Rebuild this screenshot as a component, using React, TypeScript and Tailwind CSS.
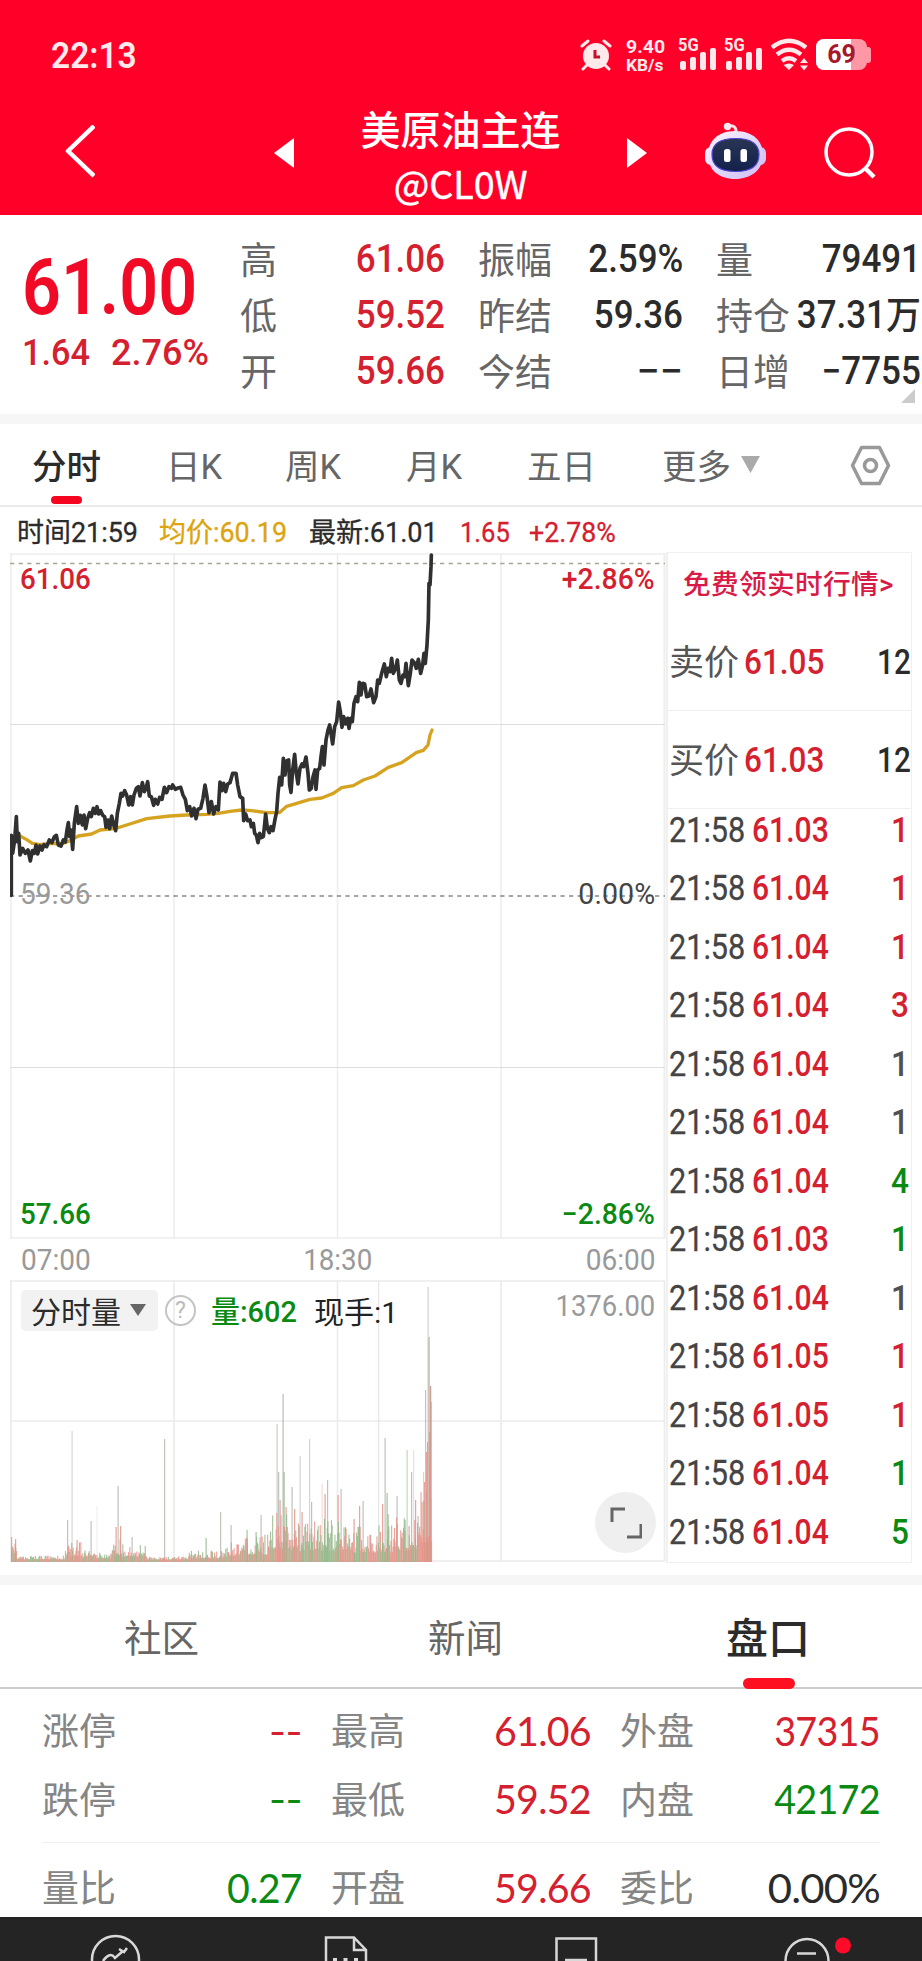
import React from "react";

const RED = "text-[#d4202f]";
const GREEN = "text-[#0a8a12]";
const GRAY = "text-[#505050]";

function StatusBar() {
  const bars = (
    <svg width="36" height="22" viewBox="0 0 36 22" fill="#ffe9ea">
      <rect x="0" y="13" width="6" height="9" rx="2" />
      <rect x="10" y="9" width="6" height="13" rx="2" />
      <rect x="20" y="4" width="6" height="18" rx="2" />
      <rect x="30" y="0" width="6" height="22" rx="2" />
    </svg>
  );
  return (
    <div className="flex h-[90px] items-start pl-[51px] pt-[38px] text-[#ffe9ea]">
      <span className="w-[529px] text-[36px] leading-none font-semibold">
        <span className="inline-block origin-left scale-x-[.93]">22:13</span>
      </span>
      <svg width="32" height="33" viewBox="0 0 32 33" fill="none" stroke="#ffe9ea" strokeLinecap="round">
        <circle cx="16" cy="18" r="13" fill="#ffe9ea" stroke="none" />
        <path d="M2 8 L8 3 M24 3 L30 8" strokeWidth="3" />
        <path d="M7 27 L3 31 M25 27 L29 31" strokeWidth="3" />
        <path d="M15 12 V19 H20" stroke="#c4102c" strokeWidth="3" strokeLinecap="butt" />
      </svg>
      <div className="ml-[14px] flex w-[52px] flex-col text-[18px] leading-[18px] font-bold whitespace-nowrap">
        <span className="origin-left scale-x-[1.08]">9.40</span>
        <span className="origin-left scale-x-[1.02] text-[17px]">KB/s</span>
      </div>
      {[0, 1].map((i) => (
        <div key={i} className="relative h-[33px] w-[46px] pt-[10px] pl-[2px]">
          <span className="absolute -top-px left-0 origin-left scale-x-[.94] text-[17.500px] leading-none font-bold">5G</span>
          {bars}
        </div>
      ))}
      <svg width="40" height="33" viewBox="0 0 40 33" fill="none" stroke="#ffe9ea" strokeWidth="4.300">
        <path d="M2 9.500 Q19 -4 36 9.500" />
        <path d="M7 16.500 Q19 7 31 16.500" />
        <path d="M12 23 Q19 17.500 26 23" />
        <path d="M13.500 27 Q19 24 24 27 L19 32 Z" fill="#ffe9ea" stroke="none" />
        <path d="M30 25 l4 -5 l4 5 z M30 27.500 l4 5 l4 -5 z" fill="#ffe9ea" stroke="none" />
      </svg>
      <div className="mt-px ml-[6px] flex h-[31px] w-[55px] items-center">
        <div className="relative flex h-[31px] w-[51px] items-center justify-center overflow-hidden rounded-[8px] bg-[#ff98a4]">
          <div className="absolute inset-y-0 left-0 w-[35px] bg-white" />
          <span className="relative text-[25px] leading-none font-bold text-[#a8182c]">69</span>
        </div>
        <div className="h-[16px] w-[4px] rounded-r-[3px] bg-[#ff98a4]" />
      </div>
    </div>
  );
}

function Robot() {
  return (
    <svg width="61" height="58" viewBox="0 0 61 58">
      <defs>
        <linearGradient id="shell" x1="0" y1="0" x2="1" y2="1">
          <stop offset="0" stopColor="#fff4fa" />
          <stop offset=".55" stopColor="#e0d6fb" />
          <stop offset="1" stopColor="#d0bef5" />
        </linearGradient>
        <linearGradient id="face" x1="0" y1="0" x2="0" y2="1">
          <stop offset="0" stopColor="#2a3553" />
          <stop offset="1" stopColor="#13214c" />
        </linearGradient>
      </defs>
      <path d="M23 4 Q32 2 31 12" fill="none" stroke="#ffdfe9" strokeWidth="3" />
      <circle cx="22.500" cy="4.500" r="3.700" fill="#ffe9ef" />
      <rect x="0" y="25" width="12" height="18" rx="6" fill="#f5eaff" />
      <rect x="49" y="25" width="12" height="18" rx="6" fill="#d6c6f6" />
      <path d="M30 9 C49 9 58 20 58 33 C58 48 46 57 30 57 C14 57 3 48 3 33 C3 20 12 9 30 9Z" fill="url(#shell)" />
      <path d="M30.500 16.500 C46 16.500 54 22 54 32.500 C54 44 46 49.500 30.500 49.500 C15 49.500 7 44 7 32.500 C7 22 15 16.500 30.500 16.500Z" fill="url(#face)" stroke="#4c45cf" strokeWidth="1.200" />
      <rect x="19" y="27" width="6.500" height="13" rx="2.500" fill="#fff" />
      <rect x="35.500" y="27" width="6.500" height="13" rx="2.500" fill="#fff" />
    </svg>
  );
}

function Header() {
  return (
    <header className="h-[215px] bg-[#ff0029] text-white">
      <StatusBar />
      <div className="flex h-[125px] items-center pl-[64px]">
        <svg width="31" height="56" viewBox="0 0 31 56" fill="none" stroke="#fff" strokeWidth="4.500" strokeLinejoin="round">
          <path d="M30 1 L4 26 L30 51" />
        </svg>
        <svg className="ml-[179px]" width="20" height="30" viewBox="0 0 20 30" fill="#fff">
          <path d="M20 0 V30 L0 15Z" />
        </svg>
        <div className="flex w-[333px] flex-col items-center pt-[4px]">
          <span className="text-[40px] leading-[56px] font-medium">美原油主连</span>
          <span className="flex h-[45px] items-center font-['Noto_Sans_CJK_SC',sans-serif] text-[38px] leading-none">
            <span className="scale-x-[.99] [-webkit-text-stroke:.5px_white]">@CL0W</span>
          </span>
        </div>
        <svg width="20" height="30" viewBox="0 0 20 30" fill="#fff">
          <path d="M0 0 V30 L20 15Z" />
        </svg>
        <div className="-mt-[3px] ml-[58px]">
          <Robot />
        </div>
        <svg className="ml-[58px]" width="52" height="52" viewBox="0 0 52 52" fill="none" stroke="#fff" strokeWidth="3.500">
          <circle cx="25" cy="25" r="23" />
          <path d="M41 41 L50 50" strokeWidth="4.500" />
        </svg>
      </div>
    </header>
  );
}

const quote: [string, string, string][][] = [
  [["高", "61.06", RED], ["振幅", "2.59%", "text-[#2b2b2b]"], ["量", "79491", "text-[#2b2b2b]"]],
  [["低", "59.52", RED], ["昨结", "59.36", "text-[#2b2b2b]"], ["持仓", "37.31万", "text-[#2b2b2b]"]],
  [["开", "59.66", RED], ["今结", "−−", "text-[#2b2b2b]"], ["日增", "−7755", "text-[#2b2b2b]"]],
];

function Quote() {
  return (
    <section className="relative flex h-[199px] bg-white">
      <div className="flex w-[240px] flex-col pt-[33px] pl-[22px]">
        <span className="origin-left scale-x-[.885] text-[77px] leading-[80px] font-semibold text-[#f00a26]">61.00</span>
        <span className="flex gap-[19px] pt-[5px] text-[36px] leading-[40px] font-medium text-[#d4202f]">
          <span className="w-[70px] origin-left scale-x-[.95]">1.64</span>
          <span className="origin-left">2.76%</span>
        </span>
      </div>
      <div className="flex flex-col pt-[16px]">
        {quote.map((row, r) => (
          <div key={r} className="flex h-[56px] items-center gap-[33px]">
            {row.map(([label, value, color]) => (
              <div key={label} className="flex w-[205px] items-center justify-between whitespace-nowrap">
                <span className="pt-[4px] text-[37px] leading-none text-[#666]">{label}</span>
                <span className={"w-0 text-[38px] leading-none font-medium " + color}>
                  <span className="flex justify-end">
                    <span className={"origin-right " + (value === "−−" ? "scale-x-[1.08]" : "scale-x-[.92]")}>{value}</span>
                  </span>
                </span>
              </div>
            ))}
          </div>
        ))}
      </div>
      <svg className="absolute right-[7px] bottom-[11px]" width="14" height="14" viewBox="0 0 14 14">
        <path d="M14 0 V14 H0Z" fill="#ccc" />
      </svg>
    </section>
  );
}

function Periods() {
  return (
    <nav className="flex h-[83px] items-center border-b-2 border-[#eaeaea] bg-white pt-[6px] pl-[32px] text-[34.500px] leading-none text-[#666]">
      <div className="relative w-[134px] font-medium text-[#2b2b2b]">
        分时
        <div className="absolute top-[46px] left-[19px] h-[8px] w-[31px] rounded-full bg-[#f5051f]" />
      </div>
      <span className="w-[119px]">日K</span>
      <span className="w-[121px]">周K</span>
      <span className="w-[121px]">月K</span>
      <span className="w-[135px]">五日</span>
      <span>更多</span>
      <svg className="mb-[6px] ml-[10px]" width="19" height="17" viewBox="0 0 19 17">
        <path d="M0 0 H19 L9.500 17Z" fill="#aaa" />
      </svg>
      <svg className="mb-[5px] ml-[90px]" width="41" height="41" viewBox="0 0 41 41" fill="none" stroke="#999" strokeWidth="3.500" strokeLinejoin="round">
        <path d="M11.500 2.500 H29.500 L38.500 20.500 L29.500 38.500 H11.500 L2.500 20.500Z" />
        <circle cx="20.500" cy="20.500" r="6" />
      </svg>
    </nav>
  );
}

function InfoLine() {
  return (
    <div className="flex h-[46px] items-center pt-[5px] pl-[17px] text-[27.500px] leading-none whitespace-nowrap text-[#2b2b2b] [-webkit-text-stroke:.3px_currentColor]">
      <span className="w-[142px]"><span className="inline-block origin-left scale-x-[.98]">时间21:59</span></span>
      <span className="w-[150px] text-[#dca40f]"><span className="inline-block origin-left scale-x-[.98]">均价:60.19</span></span>
      <span className="w-[151px]"><span className="inline-block origin-left scale-x-[.985]">最新:61.01</span></span>
      <span className="w-[69px] text-[#d4202f]"><span className="inline-block origin-left scale-x-[.93]">1.65</span></span>
      <span className="text-[#d4202f]"><span className="inline-block origin-left scale-x-[.97]">+2.78%</span></span>
    </div>
  );
}

const pricePath =
  "M34 1066 L34 886 L38 940 L44 900 L49 830 L52 905 L56 880 L60 945 L68 925 L76 940 L84 930 L91 963 L97 932 L103 940 L108 915 L113 942 L120 918 L126 930 L132 914 L140 920 L148 900 L156 908 L163 890 L169 886 L175 915 L183 918 L190 900 L196 906 L201 870 L205 848 L209 890 L213 870 L218 928 L223 850 L230 800 L235 850 L241 826 L247 855 L252 825 L257 866 L263 835 L269 818 L274 830 L280 805 L286 820 L291 800 L296 822 L302 812 L308 826 L314 830 L318 862 L324 840 L329 866 L335 828 L341 855 L347 872 L352 820 L358 790 L363 760 L368 768 L374 752 L380 765 L386 795 L392 770 L397 795 L402 765 L409 745 L415 740 L420 768 L427 728 L433 755 L438 745 L443 725 L448 768 L454 770 L461 796 L466 778 L473 792 L479 772 L486 778 L493 742 L500 758 L507 740 L514 745 L518 735 L526 748 L534 744 L542 742 L549 765 L556 778 L562 812 L569 800 L575 828 L582 805 L588 836 L594 808 L602 805 L609 775 L615 735 L621 770 L627 818 L634 785 L641 822 L648 800 L655 810 L660 726 L666 752 L671 730 L677 755 L683 732 L690 728 L698 700 L708 700 L713 735 L720 770 L728 775 L731 842 L737 822 L743 842 L750 840 L754 860 L760 850 L764 880 L769 885 L774 908 L779 880 L784 893 L790 890 L793 862 L797 822 L802 865 L808 878 L813 860 L819 872 L825 838 L830 815 L834 760 L839 712 L845 735 L850 655 L855 705 L860 663 L866 660 L869 735 L873 757 L878 690 L884 643 L889 700 L894 732 L900 685 L906 672 L911 680 L918 651 L924 700 L928 750 L934 745 L939 710 L945 690 L948 748 L953 690 L959 685 L963 650 L967 620 L972 675 L978 600 L984 570 L989 555 L993 580 L998 612 L1004 560 L1010 545 L1016 486 L1021 515 L1026 562 L1031 530 L1037 552 L1043 535 L1047 565 L1052 535 L1057 545 L1062 490 L1068 470 L1073 485 L1078 427 L1083 465 L1088 430 L1094 432 L1100 470 L1107 468 L1113 447 L1121 488 L1128 470 L1133 420 L1138 430 L1145 400 L1153 372 L1159 410 L1164 385 L1170 395 L1175 355 L1180 400 L1187 385 L1192 360 L1198 420 L1203 430 L1209 405 L1214 410 L1218 370 L1225 437 L1231 400 L1236 360 L1243 368 L1249 385 L1255 358 L1262 400 L1268 375 L1272 340 L1276 370 L1281 315 L1285 240 L1287 130 L1290 135 L1293 80 L1294 45";

const averagePath =
  "M34 890 L60 888 L80 899 L97 910 L120 914 L150 910 L185 912 L210 902 L235 888 L275 882 L300 870 L345 866 L380 855 L440 836 L510 828 L560 825 L620 823 L655 820 L690 814 L725 810 L755 812 L800 818 L838 818 L860 799 L890 790 L930 778 L965 774 L1000 760 L1025 743 L1060 737 L1090 720 L1125 708 L1165 682 L1205 668 L1250 637 L1270 631 L1284 615 L1290 585 L1296 570";

function PriceChart() {
  return (
    <div className="relative h-[686px] w-[656px] text-[29.500px] leading-none">
      <svg className="absolute top-0 left-0" width="656" height="686" viewBox="0 0 656 686">
        <g stroke="#eeeeee" strokeWidth="1.600">
          <path d="M0 1 H655 M0 685 H655 M1 0 V686 M164 0 V686 M327.500 0 V686 M491 0 V686" />
          <path d="M654.500 0 V686" strokeWidth="2" />
          <path d="M0 171.500 H655 M0 514.500 H655" stroke="#dddddd" strokeWidth="1.200" />
        </g>
        <path d="M0 10.500 H655" stroke="#a8a595" strokeWidth="1.500" strokeDasharray="4.300 4.300" />
        <path d="M0 343 H655" stroke="#888" strokeWidth="1.500" strokeDasharray="4.300 4.300" />
        <g transform="translate(-10 -13) scale(.33333)" fill="none" strokeLinejoin="round" strokeLinecap="round">
          <path d={averagePath} stroke="#d6a320" strokeWidth="10" />
          <path d={pricePath} stroke="#303030" strokeWidth="11" />
        </g>
      </svg>
      <span className="absolute top-[12px] left-[10px] origin-left scale-x-[.94] font-medium text-[#d4202f]">61.06</span>
      <span className="absolute top-[12px] right-[11px] origin-right scale-x-[.96] font-medium text-[#d4202f]">+2.86%</span>
      <span className="absolute top-[327px] left-[10px] origin-left scale-x-[.95] text-[#999]">59.36</span>
      <span className="absolute top-[327px] right-[11px] origin-right scale-x-[.97] text-[#444]">0.00%</span>
      <span className="absolute bottom-[10px] left-[10px] origin-left scale-x-[.94] font-medium text-[#0a8a12]">57.66</span>
      <span className="absolute right-[11px] bottom-[10px] origin-right scale-x-[.96] font-medium text-[#0a8a12]">−2.86%</span>
    </div>
  );
}

type Bar = { x: number; h: number; c: string; w: number };
const R = "#e5938a";
const G = "#92b98a";
const N = "#b3b8b0";

function noise(): Bar[] {
  let seed = 77;
  const rand = () => {
    seed = (seed * 1103515245 + 12345) % 2147483648;
    return seed / 2147483648;
  };
  const envelope = (x: number) => {
    if (x < 17) return 18;
    if (x < 65) return 5;
    if (x < 82) return 20;
    if (x < 112) return 10;
    if (x < 122) return 24;
    if (x < 146) return 18;
    if (x < 188) return 4;
    if (x < 225) return 10;
    if (x < 245) return 18;
    if (x < 268) return 26;
    if (x < 290) return 52;
    if (x < 345) return 42;
    if (x < 395) return 36;
    if (x < 420) return 46;
    return 80;
  };
  const out: Bar[] = [];
  for (let x = 11.5; x < 431.5; x += 0.7) {
    const e = envelope(x);
    const k = rand();
    const h = 1.500 + e * (0.22 + 0.8 * k * k);
    out.push({ x, h, c: rand() < 0.55 ? R : G, w: 1.100 });
  }
  return out;
}

const spikes: Bar[] = [
  [11.5, 25, R], [15.500, 23, R], [67.500, 42, N], [72, 131, "#ccd2ca"], [77, 22, R], [91, 41, N], [97, 56, "#ededed"], [116, 35, R], [118, 76, N],
  [120.500, 36, R], [132, 25, N], [164.500, 123, N], [206, 24, G], [220.500, 50, N], [231, 37, N], [247, 32, G], [256, 30, G], [261, 47, N],
  [277, 138, "#c4c4b8"], [278.500, 90, N], [283, 168, "#a9b2ae"], [284, 90, G], [280, 62, R], [286, 55, R], [292, 75, N], [294.500, 53, R], [300, 106, "#cccccc"],
  [302, 50, R], [309.500, 123, "#cccccc"], [311.500, 60, N], [322, 78, "#f3d5d0"], [325, 68, R], [327.500, 82, N], [338, 67, R], [341, 73, N],
  [354, 43, R], [359.500, 56, R], [363, 61, N], [378.500, 281, "#e6dfe2"], [382.500, 58, R], [385, 124, N], [387, 69, G], [388, 48, G], [397, 66, N],
  [405, 42, G], [407, 112, "#b6d0b0"], [409, 36, R], [411.500, 90, N], [413.500, 112, "#ead9d5"], [415.500, 62, R], [418, 46, N], [422, 60, R],
  [423.500, 90, "#e9c5be"], [425.500, 172, "#cfb3aa"], [426.500, 110, R], [428, 275, "#c9c5c0"], [429, 225, "#a7aca0"], [430.500, 176, "#c3897c"], [431, 160, R],
  [427.500, 120, R], [429.500, 130, R], [430, 100, R], [424.500, 80, R],
].map(([x, h, c]) => ({ x: x as number, h: h as number, c: c as string, w: 1.200 }));

const volumeBars = [...spikes, ...noise()];

function VolumeChart() {
  return (
    <div className="relative h-[282px] w-[656px] text-[29.500px] leading-none">
      <svg className="absolute top-0 left-0" width="656" height="282" viewBox="0 0 656 282">
        <path d="M0 1 H655 M0 141 H655 M0 281 H655 M1 0 V282 M164 0 V282 M327.500 0 V282 M491 0 V282 M654.500 0 V282" stroke="#ececec" strokeWidth="1.700" />
        {volumeBars.map((b, i) => (
          <rect key={i} x={b.x - 10.500} y={282 - b.h} width={b.w} height={b.h} fill={b.c} opacity=".85" />
        ))}
      </svg>
      <div className="relative flex items-start pt-[10px] pl-[11px]">
        <div className="flex h-[41px] w-[137px] items-center rounded-[5px] bg-[#f2f2f2] pt-[4px] pl-[10px] text-[30px] text-[#2b2b2b]">
          分时量
          <svg className="mb-[5px] ml-[9px]" width="16" height="12" viewBox="0 0 16 12">
            <path d="M0 0 H16 L8 12Z" fill="#666" />
          </svg>
        </div>
        <div className="mt-[5px] ml-[7px] flex size-[31px] items-center justify-center rounded-full border-2 border-[#c4c4c4] text-[23px] text-[#bbb]">?</div>
        <span className="mt-[8px] ml-[15px] w-[103px] font-medium whitespace-nowrap text-[#0a8a12]"><span className="inline-block origin-left scale-x-[.98]">量:602</span></span>
        <span className="mt-[8px] text-[30px] text-[#222]"><span className="inline-block origin-left">现手:1</span></span>
      </div>
      <span className="absolute top-[12px] right-[11px] origin-right scale-x-[.93] text-[#999]">1376.00</span>
      <div className="absolute right-[10px] bottom-[9px] flex size-[61px] items-center justify-center rounded-full bg-[#efefef]">
        <svg width="32" height="32" viewBox="0 0 32 32" fill="none" stroke="#666" strokeWidth="3">
          <path d="M2 15 V2 H15 M31 17 V30 H17" />
        </svg>
      </div>
    </div>
  );
}

const ticks: [string, string, string][] = [
  ["61.03", "1", RED],
  ["61.04", "1", RED],
  ["61.04", "1", RED],
  ["61.04", "3", RED],
  ["61.04", "1", GRAY],
  ["61.04", "1", GRAY],
  ["61.04", "4", GREEN],
  ["61.03", "1", GREEN],
  ["61.04", "1", GRAY],
  ["61.05", "1", RED],
  ["61.05", "1", RED],
  ["61.04", "1", GREEN],
  ["61.04", "5", GREEN],
];

function OrderPanel() {
  return (
    <aside className="h-[1011px] w-[246px] border border-l-2 border-[#f0f0f0] text-[35px] leading-none">
      <div className="flex h-[60px] items-center pt-[3px] pl-[15px] text-[27.700px] font-medium tracking-[.3px] whitespace-nowrap text-[#d81a47]">免费领实时行情&gt;</div>
      {[["卖价", "61.05"], ["买价", "61.03"]].map(([label, price]) => (
        <div key={label} className="flex h-[98px] items-center border-b border-[#efefef] pt-px pl-px">
          <span className="w-[75px] pt-[3px] text-[#555]">{label}</span>
          <span className="w-[100px] font-medium text-[#d4202f]"><span className="inline-block origin-left scale-x-[.9]">{price}</span></span>
          <span className="flex grow justify-end font-medium text-[#2b2b2b]"><span className="origin-right scale-x-[.85]">12</span></span>
        </div>
      ))}
      <div className="-mt-[8px]">
        {ticks.map(([price, count, color], i) => (
          <div key={i} className="flex h-[58.500px] items-center pl-px">
            <span className="w-[83px] text-[#444] [-webkit-text-stroke:.3px_currentColor]"><span className="inline-block origin-left scale-x-[.875]">21:58</span></span>
            <span className="font-medium text-[#d4202f]"><span className="inline-block origin-left scale-x-[.86]">{price}</span></span>
            <span className={"flex grow justify-end pr-[2px] font-medium " + color}><span className="origin-right scale-x-[.9]">{count}</span></span>
          </div>
        ))}
      </div>
    </aside>
  );
}

function Board() {
  return (
    <section className="flex h-[1023px] pl-[10px]">
      <div className="mt-px">
        <PriceChart />
        <div className="flex h-[41px] w-[656px] items-center justify-between pt-[3px] pr-[11px] pl-[11px] text-[29.500px] leading-none text-[#999]">
          <span className="origin-left scale-x-[.95]">07:00</span>
          <span className="scale-x-[.94]">18:30</span>
          <span className="origin-right scale-x-[.95]">06:00</span>
        </div>
        <VolumeChart />
      </div>
      <OrderPanel />
    </section>
  );
}

const stats: [string, string, string][][] = [
  [["涨停", "--", RED], ["最高", "61.06", RED], ["外盘", "37315", RED]],
  [["跌停", "--", GREEN], ["最低", "59.52", RED], ["内盘", "42172", GREEN]],
  [["量比", "0.27", GREEN], ["开盘", "59.66", RED], ["委比", "0.00%", "text-[#2b2b2b]"]],
];

function scaleOf(value: string) {
  if (value === "--") return "scale-x-[1.15] ";
  if (value.endsWith("%")) return "scale-x-[1.02] ";
  return value.includes(".") ? "scale-x-[.96] " : "scale-x-[.92] ";
}

function Stats() {
  return (
    <section className="px-[42px] pt-[7px]">
      {stats.map((row, r) => (
        <div key={r} className={"flex items-center gap-[29px] leading-none " + (r === 2 ? "mt-[9px] h-[76px] border-t border-[#f0f0f0] pt-[13px]" : "h-[68.500px]")}>
          {row.map(([label, value, color]) => (
            <div key={label} className="flex w-[260px] items-center justify-between">
              <span className="pt-[5px] text-[37px] text-[#858585]">{label}</span>
              <span className={"origin-right text-[41px] font-['Lato','Roboto',sans-serif] tracking-[-.8px] " + scaleOf(value) + color}>{value}</span>
            </div>
          ))}
        </div>
      ))}
    </section>
  );
}

function BottomNav() {
  return (
    <footer className="h-[44px] shrink-0 bg-[#242424]">
      <svg width="922" height="44" viewBox="0 0 922 44" fill="none" stroke="#d8d8d8" strokeWidth="2.500">
        <circle cx="115.500" cy="42.500" r="23.500" />
        <path d="M103 44 Q110 34 115 41 L123 34 M119 32 L124 35 L127 31" />
        <path d="M326 44 V20.500 H354 L366 33 V44 M354 20.500 V33 H366" />
        <path d="M333 42.500 H359" strokeWidth="3" strokeDasharray="4 6.500" />
        <path d="M556.500 44 V21.500 H596 V44 M565 43 H587" />
        <path d="M785.500 44 A21.500 22 0 0 1 828.500 44 M797 36.500 H816" />
        <circle cx="843" cy="28.500" r="8" fill="#ff0a28" stroke="none" />
      </svg>
    </footer>
  );
}

export default function App() {
  return (
    <div className="flex h-[1961px] w-[922px] flex-col overflow-hidden bg-white font-['Roboto','Noto_Sans_CJK_SC',sans-serif]">
      <Header />
      <Quote />
      <div className="h-[10px] bg-[#f6f6f6]" />
      <Periods />
      <InfoLine />
      <div className="-mt-px">
        <Board />
      </div>
      <div className="h-[10px] bg-[#f6f6f6]" />
      <nav className="flex h-[104px] items-center border-b-2 border-[#ccc] pt-[8px] text-[37.500px] leading-none text-[#666]">
        <span className="ml-[124px] w-[304px]">社区</span>
        <span className="w-[298px]">新闻</span>
        <div className="relative text-[42px] font-medium text-[#2b2b2b]">
          盘口
          <div className="absolute top-[59px] left-[17px] h-[11px] w-[52px] rounded-full bg-[#ff1020]" />
        </div>
      </nav>
      <div className="h-[228px] shrink-0">
        <Stats />
      </div>
      <BottomNav />
    </div>
  );
}
